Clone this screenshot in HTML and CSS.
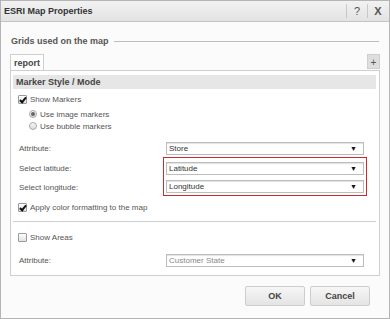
FILE: index.html
```html
<!DOCTYPE html>
<html lang="en">

<head>
    <meta charset="UTF-8">
    <meta name="viewport" content="width=device-width, initial-scale=1.0">
    <title>ESRI Map Properties</title>
    <link rel="stylesheet" href="styles.css">
</head>

<body>
    <div class="dialog">
        <div class="titlebar">
            <span class="title">ESRI Map Properties</span>
            <span class="tool">?</span>
            <span class="tool close">X</span>
        </div>

        <div class="content">
            <div class="legend">
                <span>Grids used on the map</span>
                <span class="legend-line"></span>
            </div>

            <div class="tabs">
                <span class="tab">report</span>
                <span class="tab-add">+</span>
            </div>

            <div class="panel">
                <div class="section-head">Marker Style / Mode</div>

                <label class="check-row">
                    <span class="checkbox checked"></span>Show Markers
                </label>
                <label class="radio-row first">
                    <span class="radio selected"></span>Use image markers
                </label>
                <label class="radio-row">
                    <span class="radio"></span>Use bubble markers
                </label>

                <div class="field attr">
                    <span class="field-label">Attribute:</span>
                    <div class="select"><span>Store</span><span class="arrow">&#9660;</span></div>
                </div>

                <div class="coords">
                    <div class="coord-labels">
                        <span class="field-label">Select latitude:</span>
                        <span class="field-label">Select longitude:</span>
                    </div>
                    <div class="coord-box">
                        <div class="select"><span>Latitude</span><span class="arrow">&#9660;</span></div>
                        <div class="select"><span>Longitude</span><span class="arrow">&#9660;</span></div>
                    </div>
                </div>

                <label class="check-row apply">
                    <span class="checkbox checked"></span>Apply color formatting to the map
                </label>

                <div class="separator"></div>

                <label class="check-row areas">
                    <span class="checkbox"></span>Show Areas
                </label>

                <div class="field area-attr">
                    <span class="field-label">Attribute:</span>
                    <div class="select disabled"><span>Customer State</span><span class="arrow">&#9660;</span></div>
                </div>
            </div>
        </div>

        <div class="footer">
            <button class="btn">OK</button>
            <button class="btn">Cancel</button>
        </div>
    </div>
</body>

</html>
```

FILE: styles.css
```css
body {
    margin: 0;
    font-family: 'Liberation Sans', Arial, sans-serif;
    font-size: 8px;
    color: #444;
    background-color: #fff;
}

.dialog {
    width: 390px;
    height: 319px;
    box-sizing: border-box;
    border: 1px solid #b5b5b5;
    background-color: #fbfbfb;
    display: flex;
    flex-direction: column;
}

.titlebar {
    height: 20px;
    display: flex;
    align-items: center;
    background: linear-gradient(#f2f2f2, #e3e3e3);
    border-bottom: 1px solid #c4c4c4;
}

.title {
    flex: 1;
    padding-left: 3px;
    font-size: 9px;
    font-weight: bold;
    color: #333;
}

.tool {
    width: 20px;
    height: 14px;
    line-height: 14px;
    text-align: center;
    border-left: 1px solid #c8c8c8;
    font-size: 11px;
    color: #555;
}

.close {
    font-weight: bold;
    margin-right: 1px;
}

.content {
    padding: 0 9px;
}

.legend {
    margin-top: 13px;
    height: 12px;
    display: flex;
    align-items: center;
    gap: 5px;
    padding-left: 1px;
    font-size: 9px;
    font-weight: bold;
    color: #555;
}

.legend-line {
    flex: 1;
    margin-right: 1px;
    border-top: 1px solid #bdbdbd;
}

.tabs {
    margin-top: 7px;
    height: 16px;
    display: flex;
    justify-content: space-between;
    align-items: flex-start;
}

.tab {
    height: 16px;
    line-height: 16px;
    padding: 0 3px 0 3px;
    border: 1px solid #cfcfcf;
    border-bottom: none;
    box-sizing: border-box;
    background-color: #fff;
    font-size: 9px;
    font-weight: bold;
    color: #444;
    margin-bottom: -1px;
    position: relative;
}

.tab-add {
    width: 13px;
    height: 15px;
    line-height: 15px;
    text-align: center;
    background-color: #dedede;
    border: 1px solid #cfcfcf;
    box-sizing: border-box;
    font-size: 10px;
    color: #555;
}

.panel {
    height: 206px;
    box-sizing: border-box;
    border: 1px solid #cfcfcf;
    background-color: #fff;
    padding: 4px 3px 0 2px;
}

.section-head {
    height: 14px;
    line-height: 14px;
    padding-left: 3px;
    background-color: #e6e6e6;
    font-size: 9px;
    font-weight: bold;
    color: #444;
}

.check-row,
.radio-row {
    display: flex;
    align-items: center;
    gap: 3px;
    height: 12px;
    color: #555;
}

.check-row {
    margin-top: 4px;
    padding-left: 5px;
}

.radio-row {
    padding-left: 16px;
}

.radio-row.first {
    margin-top: 3px;
}

.checkbox {
    width: 9px;
    height: 9px;
    box-sizing: border-box;
    border: 1px solid #9a9a9a;
    border-radius: 1px;
    background: linear-gradient(#fdfdfd, #e2e2e2);
    position: relative;
}

.checkbox.checked::after {
    content: "";
    position: absolute;
    left: 2px;
    top: 0;
    width: 2px;
    height: 5px;
    border: solid #111;
    border-width: 0 2px 2px 0;
    transform: rotate(40deg);
}

.radio {
    width: 8px;
    height: 8px;
    box-sizing: border-box;
    border: 1px solid #a8a8a8;
    border-radius: 50%;
    background: linear-gradient(#f8f8f8, #dcdcdc);
    position: relative;
}

.radio.selected::after {
    content: "";
    position: absolute;
    left: 1px;
    top: 1px;
    width: 4px;
    height: 4px;
    border-radius: 50%;
    background-color: #666;
}

.field {
    display: flex;
    align-items: center;
    padding-left: 6px;
}

.field-label {
    width: 147px;
    height: 13px;
    line-height: 13px;
    color: #555;
}

.attr {
    margin-top: 10px;
}

.select {
    width: 198px;
    height: 13px;
    box-sizing: border-box;
    border: 1px solid #bdbdbd;
    box-shadow: inset 0 1px 1px #e2e2e2;
    background-color: #fff;
    display: flex;
    justify-content: space-between;
    align-items: center;
    padding: 0 6px 0 2px;
    color: #333;
}

.select.disabled {
    color: #888;
}

.arrow {
    font-size: 7px;
    color: #111;
}

.coords {
    margin-top: 2px;
    display: flex;
    padding-left: 6px;
}

.coord-labels {
    width: 144px;
    display: flex;
    flex-direction: column;
    gap: 6px;
    padding-top: 5px;
}

.coord-box {
    border: 1px solid #cc2a2a;
    padding: 4px 2px 2px 2px;
    display: flex;
    flex-direction: column;
    gap: 5px;
}

.apply {
    margin-top: 5px;
}

.separator {
    margin-top: 8px;
    border-top: 1px solid #cfcfcf;
}

.areas {
    margin-top: 9px;
}

.area-attr {
    margin-top: 11px;
}

.footer {
    margin-top: 10px;
    display: flex;
    justify-content: flex-end;
    gap: 5px;
    padding-right: 19px;
}

.btn {
    width: 60px;
    height: 20px;
    border: 1px solid #cdcdcd;
    border-radius: 2px;
    background: linear-gradient(#f6f6f6, #e4e4e4);
    font-family: 'Liberation Sans', Arial, sans-serif;
    font-size: 9px;
    font-weight: bold;
    color: #444;
    padding: 0;
}
```
